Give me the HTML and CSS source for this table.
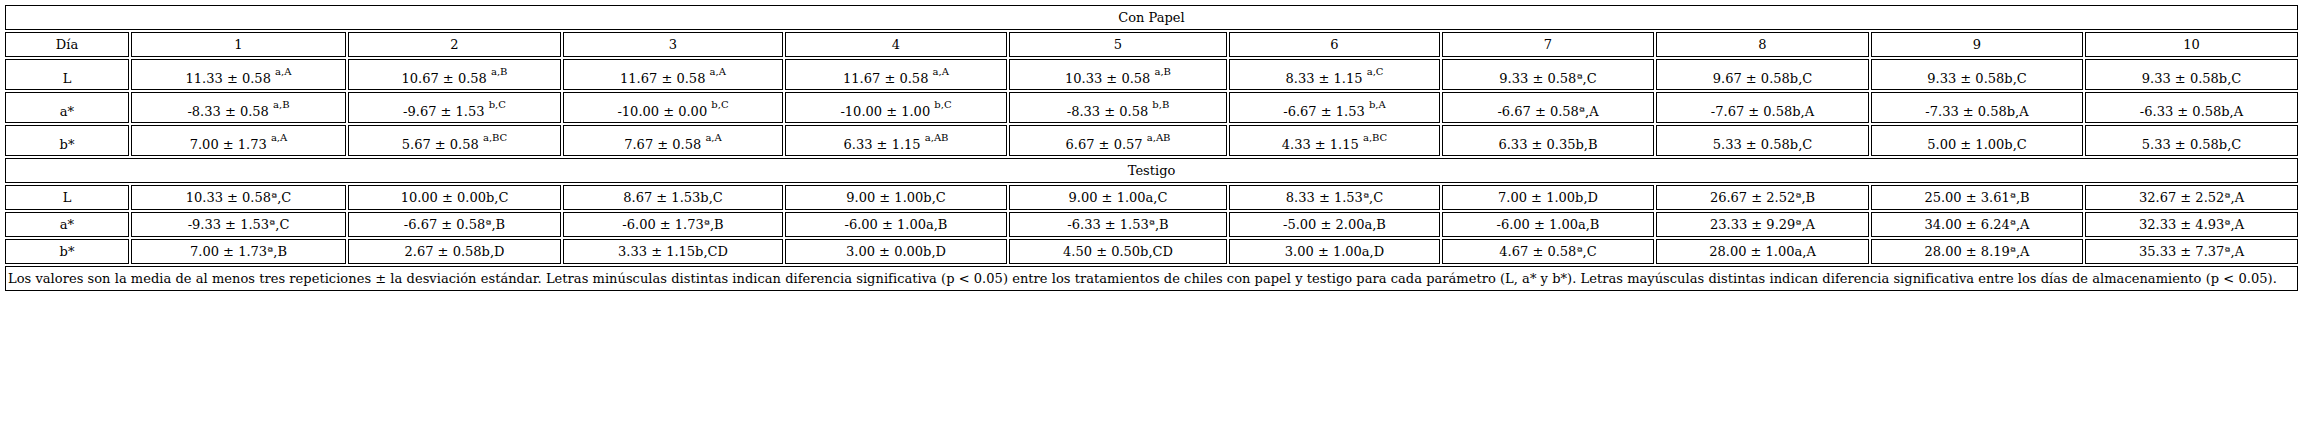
FILE: index.html
```html
<!DOCTYPE html>
<html lang="es">
<head>
<meta charset="utf-8">
<title>Con Papel / Testigo</title>
<link rel="stylesheet" href="styles.css">
</head>
<body>
<table class="data">
<colgroup>
<col class="c-label"><col class="c1"><col class="c2"><col class="c3"><col class="c4"><col class="c5"><col class="c6"><col class="c7"><col class="c8"><col class="c9"><col class="c10">
</colgroup>
<tbody>
<tr class="row"><td colspan="11">Con Papel</td></tr>
<tr class="row"><td>Día</td><td>1</td><td>2</td><td>3</td><td>4</td><td>5</td><td>6</td><td>7</td><td>8</td><td>9</td><td>10</td></tr>
<tr class="row row-sup"><td>L</td><td>11.33 ± 0.58 <sup>a,A</sup></td><td>10.67 ± 0.58 <sup>a,B</sup></td><td>11.67 ± 0.58 <sup>a,A</sup></td><td>11.67 ± 0.58 <sup>a,A</sup></td><td>10.33 ± 0.58 <sup>a,B</sup></td><td>8.33 ± 1.15 <sup>a,C</sup></td><td>9.33 ± 0.58ª,C</td><td>9.67 ± 0.58b,C</td><td>9.33 ± 0.58b,C</td><td>9.33 ± 0.58b,C</td></tr>
<tr class="row row-sup"><td>a*</td><td>-8.33 ± 0.58 <sup>a,B</sup></td><td>-9.67 ± 1.53 <sup>b,C</sup></td><td>-10.00 ± 0.00 <sup>b,C</sup></td><td>-10.00 ± 1.00 <sup>b,C</sup></td><td>-8.33 ± 0.58 <sup>b,B</sup></td><td>-6.67 ± 1.53 <sup>b,A</sup></td><td>-6.67 ± 0.58ª,A</td><td>-7.67 ± 0.58b,A</td><td>-7.33 ± 0.58b,A</td><td>-6.33 ± 0.58b,A</td></tr>
<tr class="row row-sup"><td>b*</td><td>7.00 ± 1.73 <sup>a,A</sup></td><td>5.67 ± 0.58 <sup>a,BC</sup></td><td>7.67 ± 0.58 <sup>a,A</sup></td><td>6.33 ± 1.15 <sup>a,AB</sup></td><td>6.67 ± 0.57 <sup>a,AB</sup></td><td>4.33 ± 1.15 <sup>a,BC</sup></td><td>6.33 ± 0.35b,B</td><td>5.33 ± 0.58b,C</td><td>5.00 ± 1.00b,C</td><td>5.33 ± 0.58b,C</td></tr>
<tr class="row"><td colspan="11">Testigo</td></tr>
<tr class="row"><td>L</td><td>10.33 ± 0.58ª,C</td><td>10.00 ± 0.00b,C</td><td>8.67 ± 1.53b,C</td><td>9.00 ± 1.00b,C</td><td>9.00 ± 1.00a,C</td><td>8.33 ± 1.53ª,C</td><td>7.00 ± 1.00b,D</td><td>26.67 ± 2.52ª,B</td><td>25.00 ± 3.61ª,B</td><td>32.67 ± 2.52ª,A</td></tr>
<tr class="row"><td>a*</td><td>-9.33 ± 1.53ª,C</td><td>-6.67 ± 0.58ª,B</td><td>-6.00 ± 1.73ª,B</td><td>-6.00 ± 1.00a,B</td><td>-6.33 ± 1.53ª,B</td><td>-5.00 ± 2.00a,B</td><td>-6.00 ± 1.00a,B</td><td>23.33 ± 9.29ª,A</td><td>34.00 ± 6.24ª,A</td><td>32.33 ± 4.93ª,A</td></tr>
<tr class="row"><td>b*</td><td>7.00 ± 1.73ª,B</td><td>2.67 ± 0.58b,D</td><td>3.33 ± 1.15b,CD</td><td>3.00 ± 0.00b,D</td><td>4.50 ± 0.50b,CD</td><td>3.00 ± 1.00a,D</td><td>4.67 ± 0.58ª,C</td><td>28.00 ± 1.00a,A</td><td>28.00 ± 8.19ª,A</td><td>35.33 ± 7.37ª,A</td></tr>
<tr class="row"><td colspan="11" class="note">Los valores son la media de al menos tres repeticiones ± la desviación estándar. Letras minúsculas distintas indican diferencia significativa (p &lt; 0.05) entre los tratamientos de chiles con papel y testigo para cada parámetro (L, a* y b*). Letras mayúsculas distintas indican diferencia significativa entre los días de almacenamiento (p &lt; 0.05).</td></tr>
</tbody>
</table>
</body>
</html>
```
FILE: styles.css
```css
html, body {
  background: #ffffff;
}
body {
  margin: 3px;
  font-family: "DejaVu Serif", serif;
  font-size: 13px;
  color: #000000;
}
.data {
  width: 100%;
  table-layout: fixed;
  border-collapse: separate;
  border-spacing: 2px;
  border: 0;
}
.c-label { width: 124px; }
.c1 { width: 215px; }
.c2 { width: 213px; }
.c3 { width: 220px; }
.c4 { width: 222px; }
.c5 { width: 218px; }
.c6 { width: 211px; }
.c7 { width: 212px; }
.c8 { width: 213px; }
.c9 { width: 212px; }
.c10 { width: 213px; }
.data td {
  border: 1px solid #000000;
  padding: 0 1px;
  height: 25px;
  box-sizing: border-box;
  text-align: center;
  vertical-align: middle;
  white-space: nowrap;
  line-height: 21px;
  overflow: hidden;
}
.data .row-sup td {
  height: 31px;
  padding-top: 8px;
  vertical-align: top;
}
.data sup {
  font-size: 10px;
  line-height: 0;
  vertical-align: 8px;
}
.data td.note {
  text-align: left;
  padding-left: 2px;
  letter-spacing: 0.04px;
}
```
